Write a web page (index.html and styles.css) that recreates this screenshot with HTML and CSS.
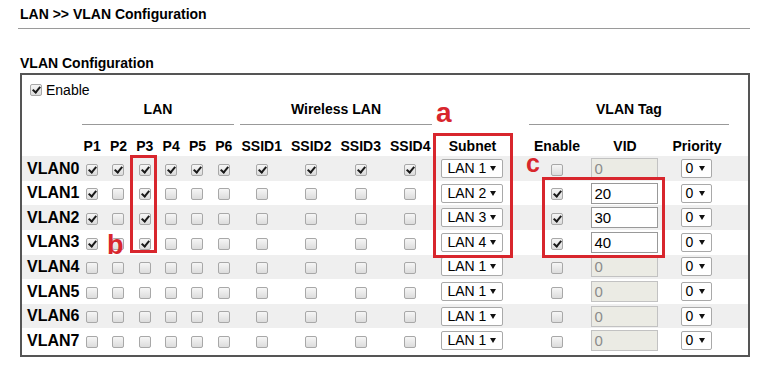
FILE: index.html
```html
<!DOCTYPE html>
<html lang="en">
<head>
  <meta charset="UTF-8">
  <title>LAN &gt;&gt; VLAN Configuration</title>
  <link rel="stylesheet" href="styles.css">
</head>
<body>
  <div class="page">
    <div class="page-title">LAN &gt;&gt; VLAN Configuration</div>
    <div class="section-title">VLAN Configuration</div>

    <div class="config-box">
      <table class="vlan-table">
        <colgroup>
          <col style="width:57px">
          <col class="port"><col class="port"><col class="port"><col class="port"><col class="port"><col class="port">
          <col class="ssid"><col class="ssid"><col class="ssid"><col class="ssid">
          <col style="width:75px">
          <col style="width:16px">
          <col style="width:62px">
          <col style="width:74px">
          <col style="width:70px">
          <col style="width:16px">
        </colgroup>
        <thead>
          <tr class="enable-row">
            <td colspan="17"><span class="cb on"></span><span class="enable-text">Enable</span></td>
          </tr>
          <tr class="group-row">
            <td></td>
            <td colspan="6"><div class="group">LAN</div></td>
            <td colspan="4"><div class="group">Wireless LAN</div></td>
            <td></td>
            <td></td>
            <td colspan="3"><div class="group">VLAN Tag</div></td>
            <td></td>
          </tr>
          <tr class="head-row">
            <th></th>
            <th>P1</th><th>P2</th><th>P3</th><th>P4</th><th>P5</th><th>P6</th>
            <th>SSID1</th><th>SSID2</th><th>SSID3</th><th>SSID4</th>
            <th>Subnet</th>
            <th></th>
            <th>Enable</th>
            <th>VID</th>
            <th>Priority</th>
            <th></th>
          </tr>
        </thead>
        <tbody>
          <tr>
            <td class="vlan-name">VLAN0</td>
            <td><span class="cb on"></span></td><td><span class="cb on"></span></td><td><span class="cb on"></span></td>
            <td><span class="cb on"></span></td><td><span class="cb on"></span></td><td><span class="cb on"></span></td>
            <td><span class="cb on"></span></td><td><span class="cb on"></span></td><td><span class="cb on"></span></td><td><span class="cb on"></span></td>
            <td><span class="select subnet">LAN 1<i class="caret"></i></span></td>
            <td></td>
            <td><span class="cb"></span></td>
            <td><span class="vid disabled">0</span></td>
            <td><span class="select prio">0<i class="caret"></i></span></td>
            <td></td>
          </tr>
          <tr>
            <td class="vlan-name">VLAN1</td>
            <td><span class="cb on"></span></td><td><span class="cb"></span></td><td><span class="cb on"></span></td>
            <td><span class="cb"></span></td><td><span class="cb"></span></td><td><span class="cb"></span></td>
            <td><span class="cb"></span></td><td><span class="cb"></span></td><td><span class="cb"></span></td><td><span class="cb"></span></td>
            <td><span class="select subnet">LAN 2<i class="caret"></i></span></td>
            <td></td>
            <td><span class="cb on"></span></td>
            <td><span class="vid">20</span></td>
            <td><span class="select prio">0<i class="caret"></i></span></td>
            <td></td>
          </tr>
          <tr>
            <td class="vlan-name">VLAN2</td>
            <td><span class="cb on"></span></td><td><span class="cb"></span></td><td><span class="cb on"></span></td>
            <td><span class="cb"></span></td><td><span class="cb"></span></td><td><span class="cb"></span></td>
            <td><span class="cb"></span></td><td><span class="cb"></span></td><td><span class="cb"></span></td><td><span class="cb"></span></td>
            <td><span class="select subnet">LAN 3<i class="caret"></i></span></td>
            <td></td>
            <td><span class="cb on"></span></td>
            <td><span class="vid">30</span></td>
            <td><span class="select prio">0<i class="caret"></i></span></td>
            <td></td>
          </tr>
          <tr>
            <td class="vlan-name">VLAN3</td>
            <td><span class="cb on"></span></td><td><span class="cb"></span></td><td><span class="cb on"></span></td>
            <td><span class="cb"></span></td><td><span class="cb"></span></td><td><span class="cb"></span></td>
            <td><span class="cb"></span></td><td><span class="cb"></span></td><td><span class="cb"></span></td><td><span class="cb"></span></td>
            <td><span class="select subnet">LAN 4<i class="caret"></i></span></td>
            <td></td>
            <td><span class="cb on"></span></td>
            <td><span class="vid">40</span></td>
            <td><span class="select prio">0<i class="caret"></i></span></td>
            <td></td>
          </tr>
          <tr>
            <td class="vlan-name">VLAN4</td>
            <td><span class="cb"></span></td><td><span class="cb"></span></td><td><span class="cb"></span></td>
            <td><span class="cb"></span></td><td><span class="cb"></span></td><td><span class="cb"></span></td>
            <td><span class="cb"></span></td><td><span class="cb"></span></td><td><span class="cb"></span></td><td><span class="cb"></span></td>
            <td><span class="select subnet">LAN 1<i class="caret"></i></span></td>
            <td></td>
            <td><span class="cb"></span></td>
            <td><span class="vid disabled">0</span></td>
            <td><span class="select prio">0<i class="caret"></i></span></td>
            <td></td>
          </tr>
          <tr>
            <td class="vlan-name">VLAN5</td>
            <td><span class="cb"></span></td><td><span class="cb"></span></td><td><span class="cb"></span></td>
            <td><span class="cb"></span></td><td><span class="cb"></span></td><td><span class="cb"></span></td>
            <td><span class="cb"></span></td><td><span class="cb"></span></td><td><span class="cb"></span></td><td><span class="cb"></span></td>
            <td><span class="select subnet">LAN 1<i class="caret"></i></span></td>
            <td></td>
            <td><span class="cb"></span></td>
            <td><span class="vid disabled">0</span></td>
            <td><span class="select prio">0<i class="caret"></i></span></td>
            <td></td>
          </tr>
          <tr>
            <td class="vlan-name">VLAN6</td>
            <td><span class="cb"></span></td><td><span class="cb"></span></td><td><span class="cb"></span></td>
            <td><span class="cb"></span></td><td><span class="cb"></span></td><td><span class="cb"></span></td>
            <td><span class="cb"></span></td><td><span class="cb"></span></td><td><span class="cb"></span></td><td><span class="cb"></span></td>
            <td><span class="select subnet">LAN 1<i class="caret"></i></span></td>
            <td></td>
            <td><span class="cb"></span></td>
            <td><span class="vid disabled">0</span></td>
            <td><span class="select prio">0<i class="caret"></i></span></td>
            <td></td>
          </tr>
          <tr>
            <td class="vlan-name">VLAN7</td>
            <td><span class="cb"></span></td><td><span class="cb"></span></td><td><span class="cb"></span></td>
            <td><span class="cb"></span></td><td><span class="cb"></span></td><td><span class="cb"></span></td>
            <td><span class="cb"></span></td><td><span class="cb"></span></td><td><span class="cb"></span></td><td><span class="cb"></span></td>
            <td><span class="select subnet">LAN 1<i class="caret"></i></span></td>
            <td></td>
            <td><span class="cb"></span></td>
            <td><span class="vid disabled">0</span></td>
            <td><span class="select prio">0<i class="caret"></i></span></td>
            <td></td>
          </tr>
        </tbody>
      </table>
    </div>

    <!-- red callouts drawn over the table -->
    <div class="mark mark-a"></div>
    <div class="mark mark-b"></div>
    <div class="mark mark-c"></div>
    <span class="tag tag-a">a</span>
    <span class="tag tag-b">b</span>
    <span class="tag tag-c">c</span>
  </div>
</body>
</html>
```

FILE: styles.css
```css
body {
  margin: 0;
  font-family: "Liberation Sans", Arial, sans-serif;
  color: #000;
  background-color: white;
}

.page {
  position: relative;
  width: 780px;
  height: 377px;
}

.page-title {
  margin: 0 30px 0 18px;
  padding: 6px 2px;
  font-size: 14px;
  line-height: 16px;
  font-weight: bold;
  border-bottom: 1px solid #9a9a9a;
}

.section-title {
  margin: 26px 0 2px 20px;
  font-size: 14px;
  line-height: 16px;
  font-weight: bold;
}

.config-box {
  margin-left: 20px;
  width: 726px;
  border: 2px solid #555;
  padding-bottom: 2px;
}

.vlan-table {
  width: 726px;
  table-layout: fixed;
  border-collapse: collapse;
  border-spacing: 0;
  font-size: 14px;
  line-height: 16px;
}

.vlan-table col.port {
  width: 26.33px;
}

.vlan-table col.ssid {
  width: 49.5px;
}

.vlan-table td,
.vlan-table th {
  padding: 0;
  text-align: center;
  vertical-align: middle;
}

.enable-row td {
  padding: 4px 0 0 8px;
  line-height: 20px;
  text-align: left;
}

.enable-text {
  margin-left: 4px;
  vertical-align: middle;
}

.group-row td {
  padding: 1px 3px 0;
}

.group {
  padding-bottom: 7px;
  border-bottom: 1px solid #999;
  font-weight: bold;
  line-height: 16px;
}

.head-row th {
  padding-top: 11px;
  line-height: 20px;
  font-weight: bold;
  white-space: nowrap;
}

.vlan-table tbody td {
  height: 24.6px;
}

.vlan-table tbody tr:nth-child(odd) {
  background-color: #efefef;
}

.vlan-table td.vlan-name {
  padding-left: 5px;
  text-align: left;
  font-size: 16px;
  font-weight: bold;
}

/* checkbox */
.cb {
  position: relative;
  display: inline-block;
  box-sizing: border-box;
  width: 12px;
  height: 12px;
  border: 1px solid #a8a8a8;
  border-radius: 2px;
  background: linear-gradient(#f6f6f6, #dcdcdc);
  vertical-align: middle;
}

.cb.on::after {
  content: "";
  position: absolute;
  left: 3px;
  top: 0px;
  width: 3px;
  height: 6px;
  border: solid #1a1a1a;
  border-width: 0 2px 2px 0;
  transform: rotate(40deg);
}

/* select boxes */
.select {
  display: inline-block;
  box-sizing: border-box;
  height: 19px;
  border: 1px solid #a9a9a9;
  border-radius: 2px;
  background-color: white;
  font-size: 14px;
  line-height: 17px;
  text-align: left;
  vertical-align: middle;
  white-space: nowrap;
}

.subnet {
  width: 62px;
  padding-left: 5px;
}

.prio {
  width: 31px;
  padding-left: 3px;
}

.caret {
  display: inline-block;
  margin-left: 4px;
  border-left: 3px solid transparent;
  border-right: 3px solid transparent;
  border-top: 5px solid #111;
  vertical-align: 2px;
}

.prio .caret {
  margin-left: 6px;
}

/* VID field */
.vid {
  display: inline-block;
  box-sizing: border-box;
  width: 67px;
  height: 21px;
  padding-left: 2px;
  border: 1px solid #999;
  background-color: white;
  font-size: 15px;
  line-height: 19px;
  text-align: left;
  vertical-align: middle;
}

.vid.disabled {
  background-color: #ebebe4;
  border-color: #c2c2c2;
  color: #8c8c8c;
}

/* annotations */
.mark {
  position: absolute;
  box-sizing: border-box;
  border: 3px solid #d8262d;
}

.mark-a {
  left: 433px;
  top: 133px;
  width: 80px;
  height: 125px;
}

.mark-b {
  left: 130px;
  top: 155px;
  width: 27px;
  height: 98px;
}

.mark-c {
  left: 542px;
  top: 177px;
  width: 123px;
  height: 81px;
}

.tag {
  position: absolute;
  color: #d8262d;
  font-weight: bold;
  line-height: 1;
}

.tag-a {
  left: 436px;
  top: 99px;
  font-size: 28px;
}

.tag-b {
  left: 107px;
  top: 232px;
  font-size: 27px;
}

.tag-c {
  left: 526px;
  top: 151px;
  font-size: 25px;
}
```
